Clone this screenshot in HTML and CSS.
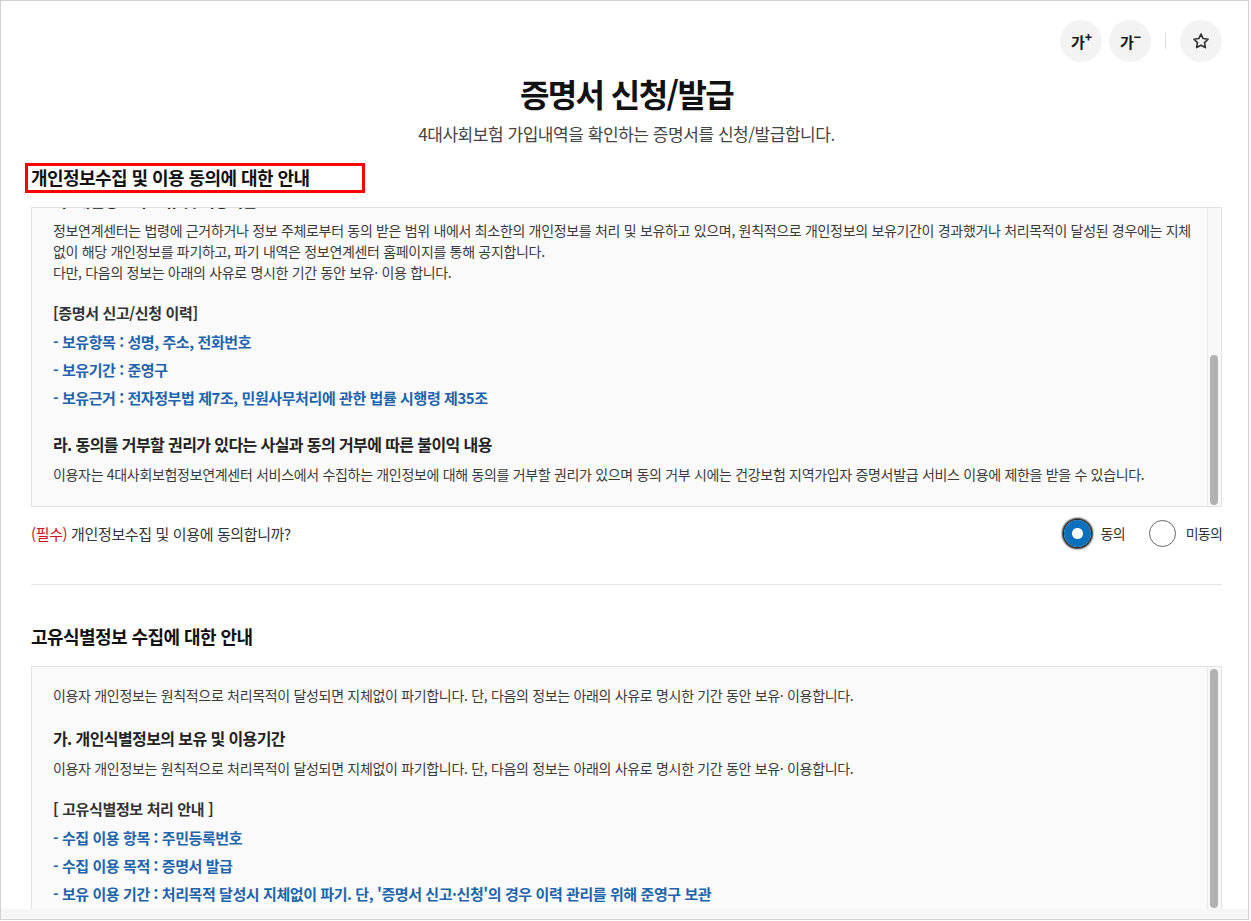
FILE: index.html
```html
<!DOCTYPE html>
<html lang="ko">
<head>
    <title>증명서 신청/발급</title>
    <meta charset="utf-8">
    <meta name="viewport" content="width=device-width, initial-scale=1">
    <link rel="stylesheet" href="styles.css">
</head>

<body>
    <div class="frame">
        <div class="page">
            <div class="tools">
                <button class="tool-btn" type="button">가<span class="sign">+</span></button>
                <button class="tool-btn" type="button">가<span class="sign">&minus;</span></button>
                <span class="tool-sep"></span>
                <button class="tool-btn" type="button">
                    <svg width="18" height="18" viewBox="0 0 24 24" fill="none" stroke="#333" stroke-width="2.2" stroke-linejoin="round">
                        <path d="M12 2.8l2.9 5.9 6.5.95-4.7 4.6 1.1 6.5L12 17.7l-5.8 3.05 1.1-6.5-4.7-4.6 6.5-.95z"/>
                    </svg>
                </button>
            </div>

            <h1 class="title">증명서 신청/발급</h1>
            <p class="lead">4대사회보험 가입내역을 확인하는 증명서를 신청/발급합니다.</p>

            <!-- 개인정보 수집 -->
            <h2 class="sec-title is-marked">개인정보수집 및 이용 동의에 대한 안내</h2>
            <div class="scroll-box">
                <div class="scroll-body">
                    <div class="scroll-inner is-scrolled">
                        <h4>다. 개인정보의 보유 및 이용기간</h4>
                        <p>정보연계센터는 법령에 근거하거나 정보 주체로부터 동의 받은 범위 내에서 최소한의 개인정보를 처리 및 보유하고 있으며, 원칙적으로 개인정보의 보유기간이 경과했거나 처리목적이 달성된 경우에는 지체 없이 해당 개인정보를 파기하고, 파기 내역은 정보연계센터 홈페이지를 통해 공지합니다.<br>다만, 다음의 정보는 아래의 사유로 명시한 기간 동안 보유· 이용 합니다.</p>
                        <p class="list-title">[증명서 신고/신청 이력]</p>
                        <ul class="keep-list">
                            <li>- 보유항목 : 성명, 주소, 전화번호</li>
                            <li>- 보유기간 : 준영구</li>
                            <li>- 보유근거 : 전자정부법 제7조, 민원사무처리에 관한 법률 시행령 제35조</li>
                        </ul>
                        <h4>라. 동의를 거부할 권리가 있다는 사실과 동의 거부에 따른 불이익 내용</h4>
                        <p>이용자는 4대사회보험정보연계센터 서비스에서 수집하는 개인정보에 대해 동의를 거부할 권리가 있으며 동의 거부 시에는 건강보험 지역가입자 증명서발급 서비스 이용에 제한을 받을 수 있습니다.</p>
                    </div>
                </div>
                <div class="scroll-track"><div class="thumb thumb-1"></div></div>
            </div>

            <div class="agree">
                <p class="agree-q"><em>(필수)</em> 개인정보수집 및 이용에 동의합니까?</p>
                <div class="choices">
                    <label class="choice"><span class="radio is-on"></span>동의</label>
                    <label class="choice"><span class="radio"></span>미동의</label>
                </div>
            </div>

            <hr class="divider">

            <!-- 고유식별정보 -->
            <h2 class="sec-title sec-2">고유식별정보 수집에 대한 안내</h2>
            <div class="scroll-box">
                <div class="scroll-body">
                    <div class="scroll-inner">
                        <p>이용자 개인정보는 원칙적으로 처리목적이 달성되면 지체없이 파기합니다. 단, 다음의 정보는 아래의 사유로 명시한 기간 동안 보유· 이용합니다.</p>
                        <h4>가. 개인식별정보의 보유 및 이용기간</h4>
                        <p>이용자 개인정보는 원칙적으로 처리목적이 달성되면 지체없이 파기합니다. 단, 다음의 정보는 아래의 사유로 명시한 기간 동안 보유· 이용합니다.</p>
                        <p class="list-title">[ 고유식별정보 처리 안내 ]</p>
                        <ul class="keep-list">
                            <li>- 수집 이용 항목 : 주민등록번호</li>
                            <li>- 수집 이용 목적 : 증명서 발급</li>
                            <li>- 보유 이용 기간 : 처리목적 달성시 지체없이 파기. 단, '증명서 신고·신청'의 경우 이력 관리를 위해 준영구 보관</li>
                        </ul>
                    </div>
                </div>
                <div class="scroll-track"><div class="thumb thumb-2"></div></div>
            </div>
        </div>
    </div>
</body>
</html>
```

FILE: styles.css
```css
:root {
    --line: #e2e2e2;
    --blue: #1d64ad;
    --red: #d0101b;
    --text: #3a3a3a;
}

body {
    margin: 0;
    color: var(--text);
    font-family: "Noto Sans CJK KR", "Noto Sans", sans-serif;
    background-color: #fff;
}
.frame {
    width: 1249px;
    height: 920px;
    box-sizing: border-box;
    border: 1px solid #d2d2d2;
    background-color: #f6f6f6;
}
.page {
    height: 908px;
    box-sizing: border-box;
    overflow: hidden;
    padding: 19px 26px 0 30px;
    background-color: #fff;
}

/* top tools */
.tools {
    display: flex;
    justify-content: flex-end;
    align-items: center;
    height: 42px;
}
.tool-btn {
    display: flex;
    align-items: center;
    justify-content: center;
    width: 42px;
    height: 42px;
    padding: 0;
    border: 0;
    border-radius: 50%;
    background-color: #f3f3f3;
    color: #1a1a1a;
    font-family: inherit;
    font-size: 15px;
    font-weight: 700;
    letter-spacing: -1px;
}
.tool-btn + .tool-btn {
    margin-left: 7px;
}
.sign {
    position: relative;
    top: -5px;
    font-size: 12px;
    font-weight: 900;
    margin-left: 1px;
}
.tool-sep {
    width: 1px;
    height: 16px;
    background-color: #e0e0e0;
    margin: 0 14px;
}

/* heading */
.title {
    margin: 11px 0 0;
    text-align: center;
    font-size: 32px;
    line-height: 40px;
    font-weight: 700;
    letter-spacing: -1.6px;
    color: #111;
}
.lead {
    margin: 9px 0 0;
    text-align: center;
    font-size: 17px;
    line-height: 24px;
    letter-spacing: -0.45px;
    color: #444;
}
.sec-title {
    margin: 18px 0 0;
    font-size: 18px;
    line-height: 26px;
    font-weight: 700;
    letter-spacing: -0.55px;
    color: #111;
}
.sec-title.is-marked {
    position: relative;
}
.sec-title.is-marked::after {
    content: "";
    position: absolute;
    left: -6px;
    top: -1px;
    width: 340px;
    height: 30px;
    box-sizing: border-box;
    border: 3px solid #f00;
}
.sec-2 {
    margin-top: 38px;
}

/* scroll box */
.scroll-box {
    display: flex;
    height: 300px;
    box-sizing: border-box;
    margin-top: 17px;
    border: 1px solid var(--line);
    background-color: #fafafa;
}
.scroll-body {
    flex: 1;
    overflow: hidden;
    padding: 0 14px 0 21px;
}
.scroll-inner {
    padding-top: 18px;
    word-break: keep-all;
}
.scroll-inner.is-scrolled {
    margin-top: -38px;
}
.scroll-inner p {
    margin: 8px 0 0;
    font-size: 14px;
    line-height: 21px;
    letter-spacing: -0.32px;
}
.scroll-inner p:first-child {
    margin-top: 0;
}
.scroll-inner h4 {
    margin: 20px 0 0;
    font-size: 16px;
    line-height: 24px;
    font-weight: 700;
    letter-spacing: -0.6px;
    color: #222;
}
.scroll-inner h4:first-child {
    margin-top: 0;
}
.scroll-inner .list-title {
    margin-top: 18px;
    font-size: 15px;
    line-height: 24px;
    font-weight: 700;
    letter-spacing: -0.36px;
    color: #333;
}
.keep-list {
    list-style: none;
    margin: 3px 0 0;
    padding: 0;
}
.keep-list li {
    font-size: 15px;
    line-height: 28px;
    font-weight: 700;
    letter-spacing: -0.42px;
    color: var(--blue);
}
.scroll-track {
    width: 13px;
    border-left: 1px solid #e8e8e8;
    background-color: #f8f8f8;
}
.thumb {
    width: 8px;
    margin-left: 2px;
    border-radius: 4px;
    background-color: #b2b2b2;
}
.thumb-1 {
    height: 150px;
    margin-top: 147px;
}
.thumb-2 {
    height: 239px;
    margin-top: 2px;
}

/* agree row */
.agree {
    display: flex;
    justify-content: space-between;
    align-items: center;
    height: 30px;
    margin-top: 11px;
}
.agree-q {
    margin: 0;
    font-size: 15px;
    letter-spacing: -0.37px;
    color: #333;
}
.agree-q em {
    font-style: normal;
    color: var(--red);
}
.choices {
    display: flex;
    align-items: center;
}
.choice {
    display: flex;
    align-items: center;
    font-size: 14px;
    letter-spacing: -0.8px;
    color: #333;
}
.choice + .choice {
    margin-left: 24px;
}
.radio {
    width: 27px;
    height: 27px;
    box-sizing: border-box;
    border-radius: 50%;
    border: 1px solid #666;
    background-color: #fff;
    margin-right: 10px;
}
.radio.is-on {
    border: 0;
    background: radial-gradient(circle, #fff 0 5px, #0a70bb 6px);
    box-shadow: 0 0 2px 2px #1b1b1b;
}

.divider {
    margin: 36px 0 0;
    border: 0;
    border-top: 1px solid #e6e6e6;
}
```
